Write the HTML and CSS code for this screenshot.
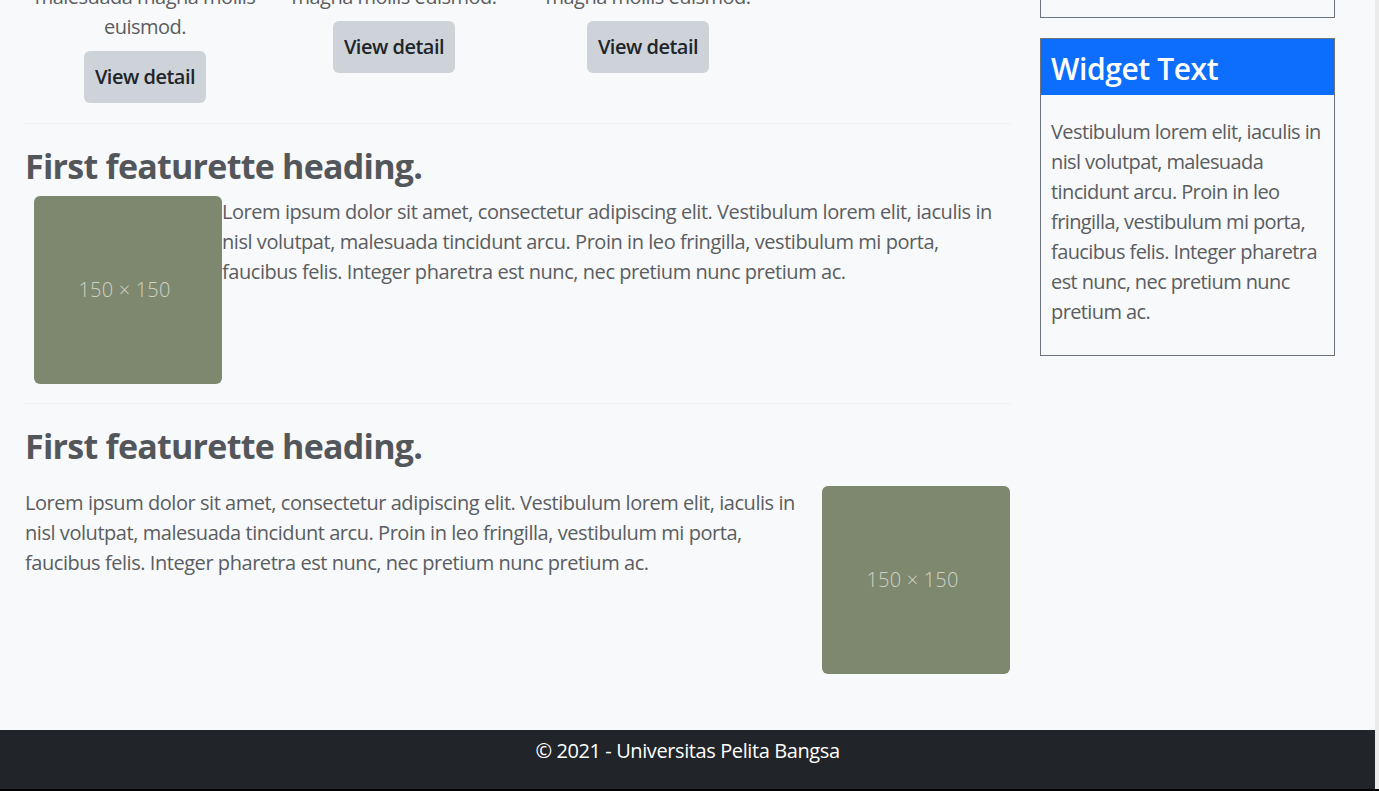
FILE: index.html
```html
<!DOCTYPE html>
<html lang="id">
<head>
<meta charset="utf-8">
<title>Universitas Pelita Bangsa</title>
<link rel="stylesheet" href="styles.css">
</head>
<body>
<div class="page">
  <div class="layout">
    <main class="main">
      <section class="marketing">
        <div class="mk-col">
          <p>Donec sed odio dui.<br>Etiam porta sem<br>malesuada magna mollis<br>euismod.</p>
          <a class="btn" href="#">View detail</a>
        </div>
        <div class="mk-col">
          <p>Donec sed odio dui.<br>Etiam porta sem<br>magna mollis euismod.</p>
          <a class="btn" href="#">View detail</a>
        </div>
        <div class="mk-col">
          <p>Donec sed odio dui.<br>Etiam porta sem<br>magna mollis euismod.</p>
          <a class="btn" href="#">View detail</a>
        </div>
      </section>

      <hr class="divider">

      <section class="featurette feat-one">
        <h2 class="feat-heading">First featurette heading.</h2>
        <div class="feat-row">
          <div class="placeholder feat-img-left">150 × 150</div>
          <p class="feat-text">Lorem ipsum dolor sit amet, consectetur adipiscing elit. Vestibulum lorem elit, iaculis in nisl volutpat, malesuada tincidunt arcu. Proin in leo fringilla, vestibulum mi porta, faucibus felis. Integer pharetra est nunc, nec pretium nunc pretium ac.</p>
        </div>
      </section>

      <hr class="divider divider-two">

      <section class="featurette feat-two">
        <h2 class="feat-heading">First featurette heading.</h2>
        <div class="feat-row">
          <p class="feat-text feat-text-left">Lorem ipsum dolor sit amet, consectetur adipiscing elit. Vestibulum lorem elit, iaculis in nisl volutpat, malesuada tincidunt arcu. Proin in leo fringilla, vestibulum mi porta, faucibus felis. Integer pharetra est nunc, nec pretium nunc pretium ac.</p>
          <div class="placeholder feat-img-right">150 × 150</div>
        </div>
      </section>
    </main>

    <aside class="sidebar">
      <div class="side-box"></div>
      <div class="widget">
        <h3 class="widget-title">Widget Text</h3>
        <p class="widget-body">Vestibulum lorem elit, iaculis in nisl volutpat, malesuada tincidunt arcu. Proin in leo fringilla, vestibulum mi porta, faucibus felis. Integer pharetra est nunc, nec pretium nunc pretium ac.</p>
      </div>
    </aside>
  </div>

  <footer class="footer">© 2021 - Universitas Pelita Bangsa</footer>
</div>
<div class="edge"></div>
</body>
</html>
```

FILE: styles.css
```css
html, body {
  margin: 0;
  padding: 0;
}

body {
  display: flex;
  height: 791px;
  overflow: hidden;
  background: #ebebeb;
  font-family: "Open Sans", "Noto Sans", sans-serif;
  font-size: 20px;
  line-height: 30px;
  color: #5a5d61;
  border-bottom: 2px solid #000;
  box-sizing: border-box;
}

.page {
  width: 1375px;
  flex: none;
  background: #f8f9fa;
  display: flex;
  flex-direction: column;
  height: 789px;
  overflow: hidden;
}

.edge {
  flex: 1;
}

.layout {
  display: flex;
  gap: 30px;
  margin-top: -78px;
  padding-left: 25px;
  flex: 1;
}

.main {
  width: 985px;
  flex: none;
}

/* marketing columns */
.marketing {
  display: grid;
  grid-template-columns: 250px 248px 260px;
  margin-left: -5px;
  align-items: start;
}

.mk-col {
  text-align: center;
  display: flex;
  flex-direction: column;
  align-items: center;
}

.mk-col p {
  margin: 0 0 9px;
  white-space: nowrap;
  letter-spacing: -0.5px;
}

.btn {
  display: inline-block;
  width: 122px;
  height: 52px;
  line-height: 52px;
  box-sizing: border-box;
  background: #ced3d9;
  color: #212529;
  font-weight: 600;
  font-size: 20px;
  letter-spacing: -0.5px;
  border-radius: 6px;
  text-decoration: none;
  text-align: center;
}

.divider {
  border: 0;
  border-top: 1px solid #eef0f2;
  margin: 20px 0 0;
  height: 0;
}

.divider-two {
  margin-top: 19px;
}

.featurette {
  padding-top: 22px;
}

.feat-heading {
  margin: 0 0 9px;
  font-size: 34px;
  line-height: 41px;
  font-weight: 700;
  color: #53575b;
  letter-spacing: -0.75px;
}

.feat-two .feat-heading {
  margin-bottom: 20px;
}

.feat-row {
  display: flex;
  align-items: flex-start;
}

.feat-text {
  margin: 1px 0 0;
  letter-spacing: -0.45px;
}

.feat-one .feat-text {
  flex: 1;
}

.feat-text-left {
  width: 775px;
  flex: none;
}

.placeholder {
  width: 188px;
  height: 188px;
  box-sizing: border-box;
  padding-right: 7px;
  flex: none;
  background: #7d886f;
  color: #cfd3c6;
  border-radius: 6px;
  display: flex;
  align-items: center;
  justify-content: center;
  font-family: "Open Sans", sans-serif;
  font-size: 20px;
  font-weight: 300;
  letter-spacing: 0.2px;
}

.feat-img-left {
  margin-left: 9px;
}

.feat-img-right {
  margin-left: auto;
  margin-top: -1px;
}

/* sidebar */
.sidebar {
  width: 295px;
  flex: none;
}

.side-box {
  height: 96px;
  border: 1px solid #6c757d;
  box-sizing: border-box;
}

.widget {
  margin-top: 20px;
  border: 1px solid #6c757d;
}

.widget-title {
  margin: 0;
  background: #0d6efd;
  color: #fff;
  font-size: 30px;
  line-height: 52px;
  height: 56px;
  box-sizing: border-box;
  padding: 4px 10px 0;
  font-weight: 600;
  letter-spacing: -0.4px;
}

.widget-body {
  margin: 0;
  padding: 22px 10px 28px;
  letter-spacing: -0.6px;
}

/* footer */
.footer {
  background: #212529;
  color: #fff;
  text-align: center;
  height: 59px;
  box-sizing: border-box;
  padding-top: 6px;
  letter-spacing: -0.4px;
  flex: none;
}
```
